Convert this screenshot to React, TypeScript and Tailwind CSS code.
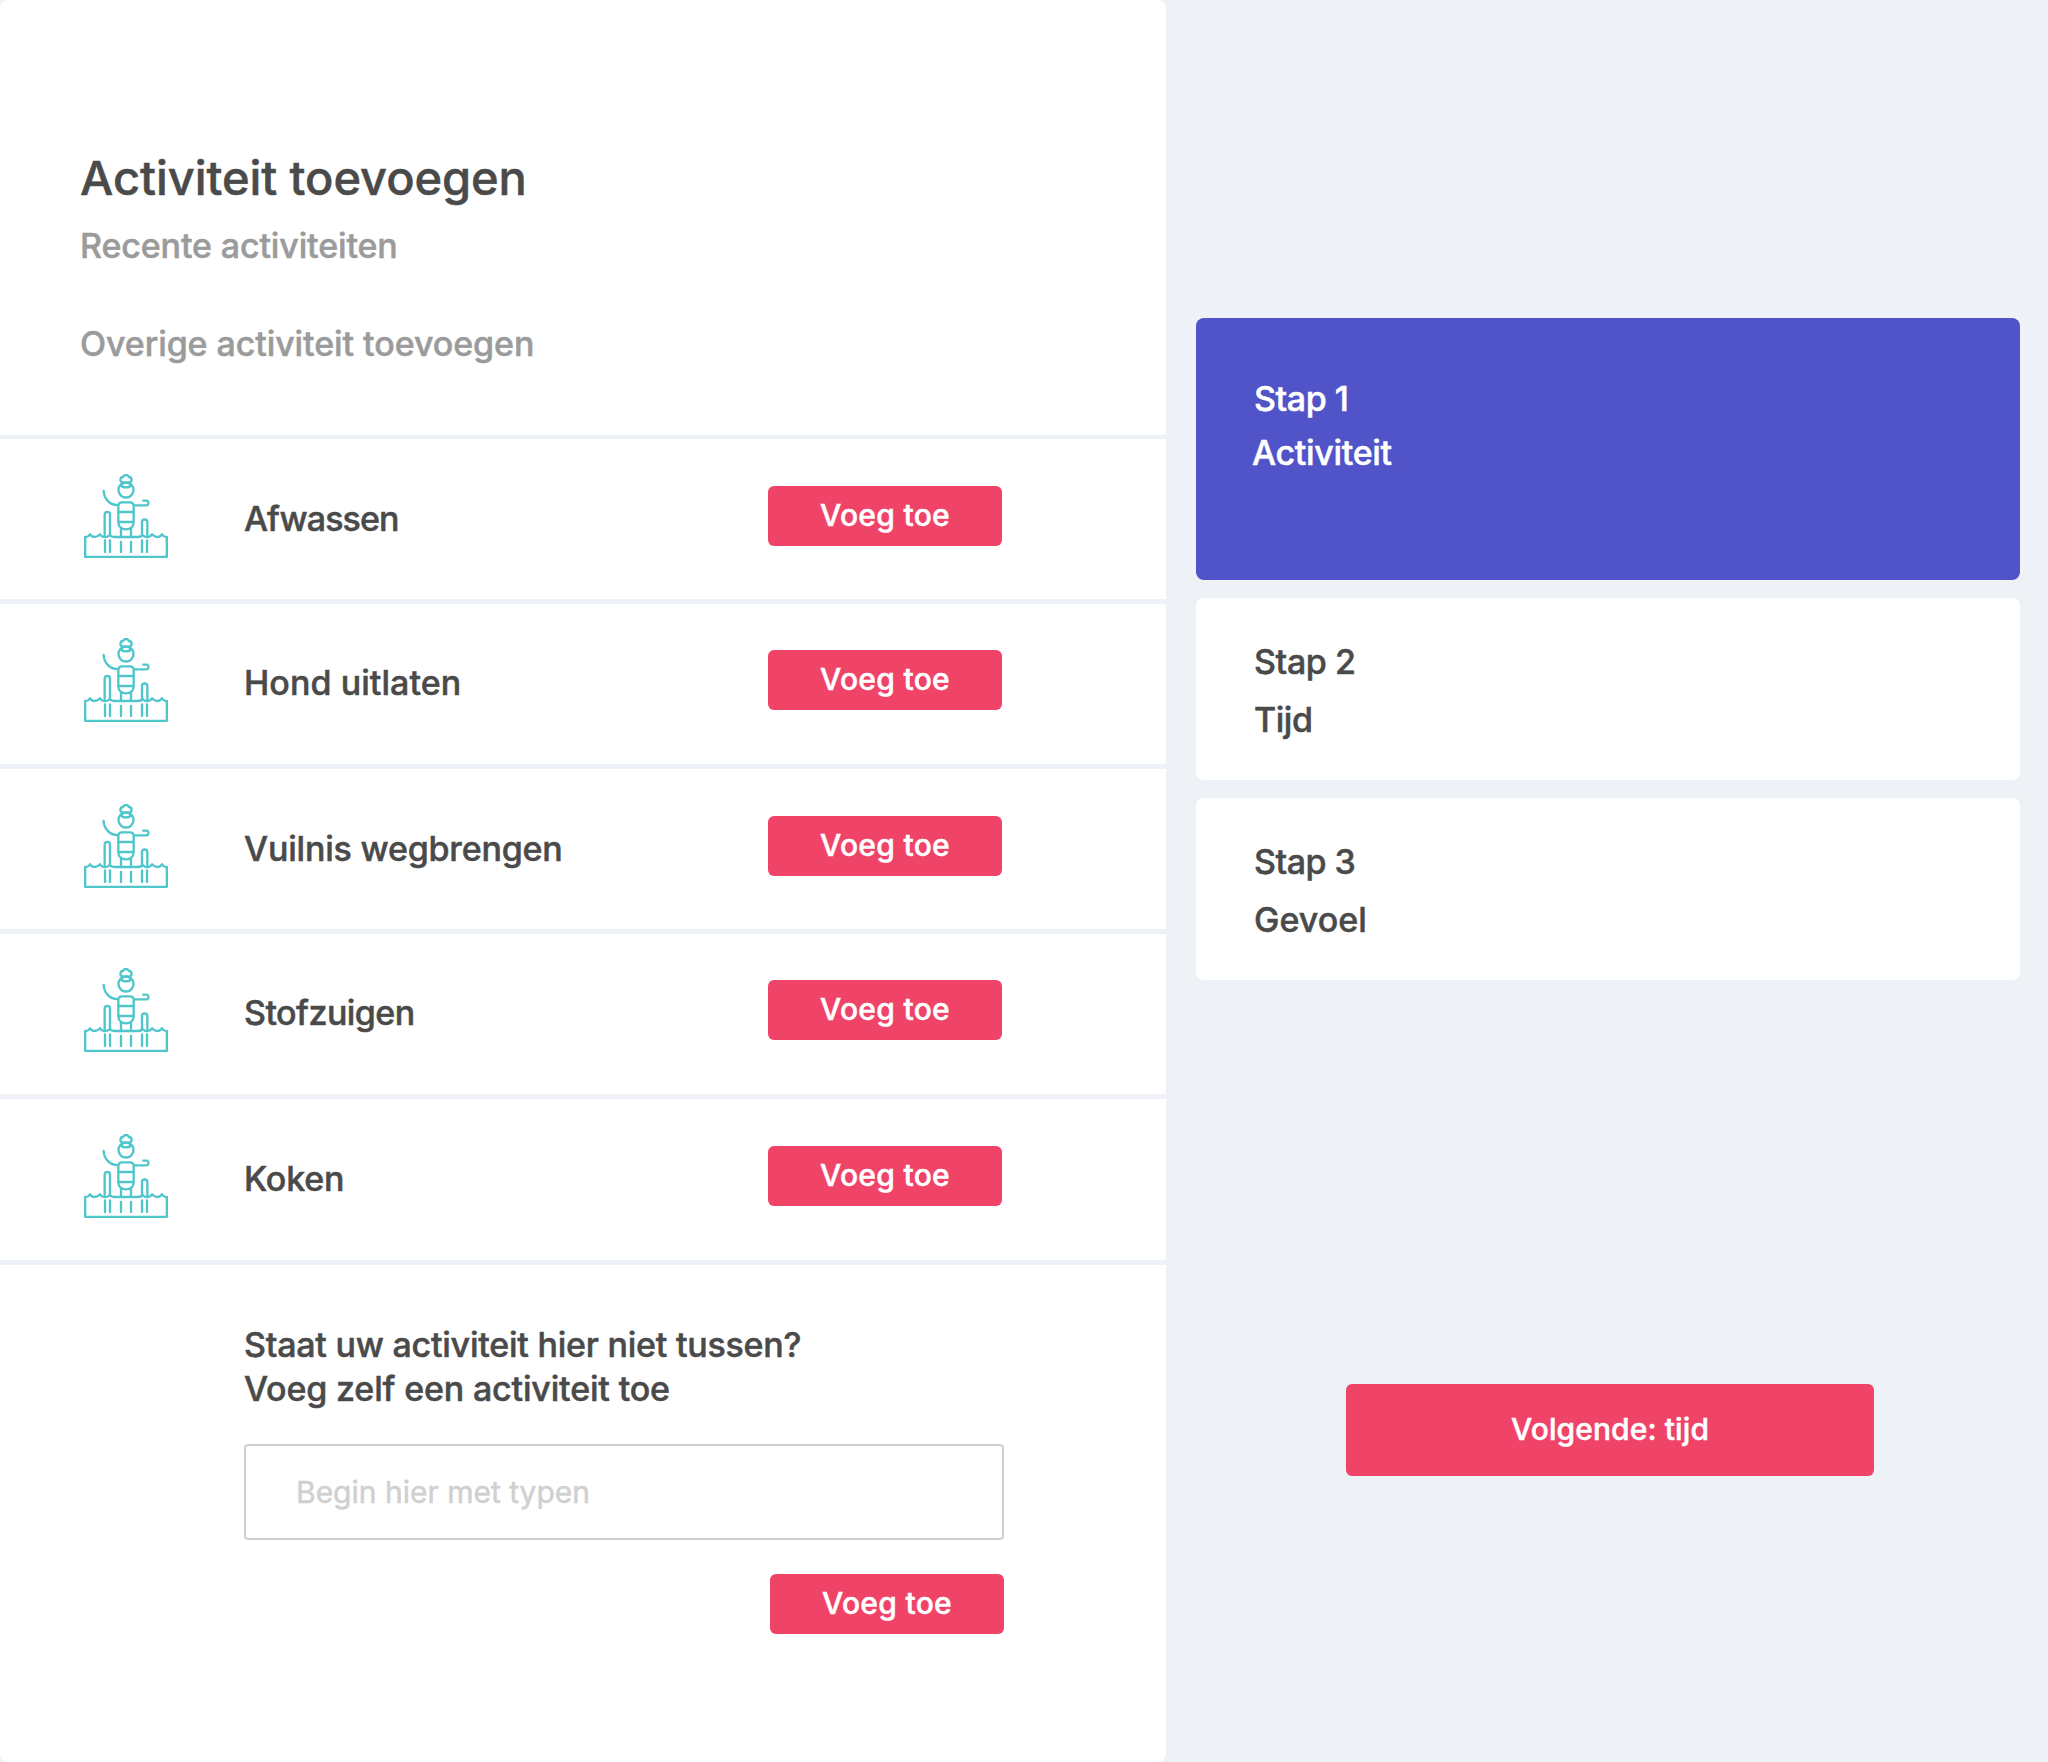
import clsx from "clsx";

type Activity = { name: string; row: string; label: string };

const activities: Activity[] = [
  { name: "Afwassen", row: "h-[160px] pt-[35px]", label: "tracking-[-0.93px]" },
  { name: "Hond uitlaten", row: "h-[160px] pt-[34px]", label: "tracking-[0.05px]" },
  { name: "Vuilnis wegbrengen", row: "h-[160px] pt-[35px]", label: "tracking-[-0.2px]" },
  { name: "Stofzuigen", row: "h-[160px] pt-[34px]", label: "tracking-[-0.55px]" },
  { name: "Koken", row: "h-[161px] pt-[35px]", label: "tracking-[-0.2px]" },
];

function SwimmerIcon() {
  return (
    <svg
      viewBox="42 42 252 252"
      className="h-[84px] w-[84px] shrink-0"
      fill="none"
      stroke="#4fc6cc"
      strokeWidth="7"
      strokeLinecap="round"
      strokeLinejoin="round"
      aria-hidden="true"
    >
      {/* head and hair bun */}
      <circle cx="168" cy="90" r="22.5" />
      <path d="M157 67C149 65 149 52 159 51C162 43 174 43 177 51C187 52 187 65 179 67" />
      <path d="M156 73C156 65 180 65 180 73" />
      <path d="M153 76C158 84 178 84 183 76" />
      {/* arms */}
      <path d="M101 93C102 116 119 135 142 135.5" />
      <path d="M193 136H229C237 136 238 122 229 122H220" />
      {/* torso */}
      <path d="M156 127H180Q191 127 191 138V186C191 200 181 208 168 208S145 200 145 186V138Q145 127 156 127Z" />
      <path d="M146 156H190M146 186H190" />
      <path d="M153 206V229M183 206V229" />
      {/* poles */}
      <path d="M104 226V164C104 153 120 153 120 164V226" />
      <path d="M216 226V186C216 176 232 176 232 186V226" />
      {/* basin */}
      <path d="M45.5 231V290.5H290.5V231C285 232 280 229 276 223C270 233 255 234 246 223C240 233 228 235 218 225C214 231 210 231 203 231H133C127 231 123 230 119 225C108 235 96 233 90 223C81 234 66 233 60 223C56 229 51 232 45.5 231Z" />
      {/* reflections */}
      <path d="M105 241V276M120 241V276M153 246V276M183 246V276M216 241V276M231 241V276" />
    </svg>
  );
}

function AddButton({ className }: { className?: string }) {
  return (
    <button
      className={clsx(
        "block h-[60px] w-[234px] shrink-0 rounded-md bg-[#ef4367] pb-[2px] text-center text-[30px] leading-[57px] tracking-[0.3px] text-white",
        className,
      )}
    >
      Voeg toe
    </button>
  );
}

export default function App() {
  return (
    <div className="flex h-[1762px] w-[2048px] overflow-hidden bg-[#eef2f7] font-['Inter',sans-serif] text-[34px] leading-[44px] font-medium text-[#4a4a4a] [-webkit-text-stroke:0.5px]">
      <main className="h-full w-[1166px] rounded-lg bg-white">
        <header className="h-[435px] pt-[148px] pl-[80px]">
          <h1 className="text-[47px] leading-[60px] tracking-[-0.06px]">Activiteit toevoegen</h1>
          <p className="mt-4 tracking-[-0.14px] text-[#9b9b9b]">Recente activiteiten</p>
          <p className="mt-[54px] tracking-[-0.09px] text-[#9b9b9b]">Overige activiteit toevoegen</p>
        </header>

        <div className="h-1 bg-[#eef2f7]" />
        <ul>
          {activities.map((a) => (
            <li key={a.name} className="border-b-[5px] border-[#eef2f7]">
              <div className={clsx("flex items-start pl-[84px]", a.row)}>
                <SwimmerIcon />
                <span className={clsx("mt-[22px] ml-[76px] w-[524px] pt-[0.5px]", a.label)}>{a.name}</span>
                <AddButton className="mt-3" />
              </div>
            </li>
          ))}
        </ul>

        <form className="ml-[244px] w-[760px] pt-[58px]">
          <p className="tracking-[-0.24px]">Staat uw activiteit hier niet tussen?</p>
          <p className="tracking-[-0.17px]">Voeg zelf een activiteit toe</p>
          <input
            type="text"
            placeholder="Begin hier met typen"
            className="mt-[33px] block h-24 w-full rounded border-2 border-[#d0d0d0] pb-px pl-[50px] text-[30px] font-normal placeholder:text-[#d0d0d0]"
          />
          <AddButton className="mt-[34px] ml-auto" />
        </form>
      </main>

      <aside className="ml-[30px] w-[824px] pt-[318px]">
        <section className="h-[262px] rounded-lg bg-[#5153c9] pt-[54px] pl-[58px] leading-[54px] text-white">
          <h2 className="tracking-[-0.45px]">Stap 1</h2>
          <p className="-ml-0.5 tracking-[-0.32px]">Activiteit</p>
        </section>
        <section className="mt-[18px] h-[182px] rounded-lg bg-white pt-[35px] pl-[58px] leading-[58px]">
          <h2 className="tracking-[-0.4px]">Stap 2</h2>
          <p className="tracking-[-0.45px]">Tijd</p>
        </section>
        <section className="mt-[18px] h-[182px] rounded-lg bg-white pt-[35px] pl-[58px] leading-[58px]">
          <h2 className="tracking-[-0.5px]">Stap 3</h2>
          <p>Gevoel</p>
        </section>
        <button className="mt-[404px] ml-[150px] block h-[92px] w-[528px] rounded-md bg-[#ef4367] pb-[2px] text-center text-[30px] leading-[89px] tracking-[0.1px] text-white">
          Volgende: tijd
        </button>
      </aside>
    </div>
  );
}
